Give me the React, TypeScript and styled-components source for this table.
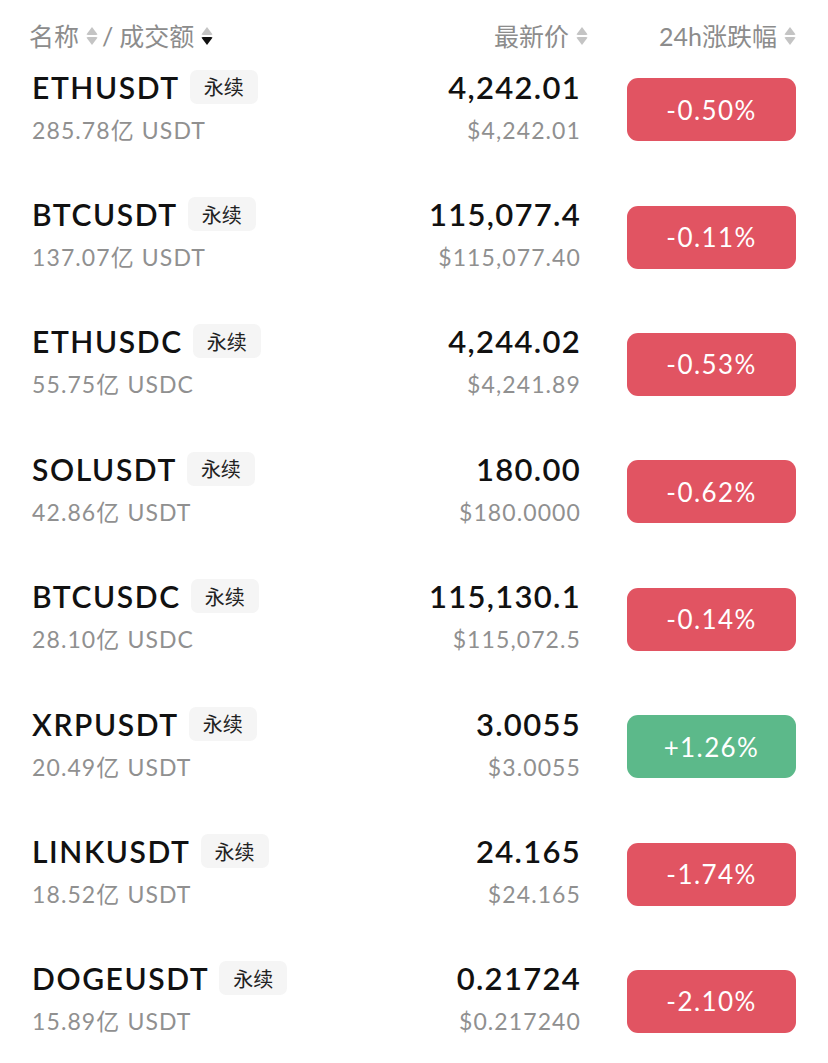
import React from "react";
import styled, { createGlobalStyle } from "styled-components";

const GlobalStyle = createGlobalStyle`
  html, body {
    margin: 0;
    padding: 0;
    background: #fff;
  }
  body {
    font-family: "Lato", "Noto Sans CJK SC", sans-serif;
    -webkit-font-smoothing: antialiased;
  }
`;

const Page = styled.div`
  width: 828px;
  padding: 0 32px;
  box-sizing: border-box;
`;

const Header = styled.div`
  display: grid;
  grid-template-columns: 1fr 200px 169px;
  column-gap: 46px;
  height: 46px;
  padding-top: 22px;
  box-sizing: border-box;
  font-size: 25px;
  line-height: 28px;
  color: #8c8c8c;
`;

const HeadCell = styled.div<{ $align?: "left" | "right"; $shift?: number }>`
  display: flex;
  align-items: center;
  justify-content: ${(p) => (p.$align === "right" ? "flex-end" : "flex-start")};
  margin-right: ${(p) => (p.$shift ? `${-p.$shift}px` : "0")};
  margin-left: ${(p) => (p.$align === "left" ? "-3px" : "0")};
  white-space: nowrap;
`;

const Slash = styled.span`
  margin: 0 6px 0 4px;
`;

const SortWrap = styled.span`
  display: inline-flex;
  flex-direction: column;
  gap: 2px;
  margin-left: 7px;
`;

const Tri = styled.span<{ $dir: "up" | "down"; $on?: boolean }>`
  width: 0;
  height: 0;
  border-left: 6px solid transparent;
  border-right: 6px solid transparent;
  ${(p) =>
    p.$dir === "up"
      ? `border-bottom: 8px solid ${p.$on ? "#111" : "#c4c4c4"};`
      : `border-top: 8px solid ${p.$on ? "#111" : "#c4c4c4"};`}
  border-radius: 2px;
`;

const Row = styled.div`
  display: grid;
  grid-template-columns: 1fr 200px 169px;
  column-gap: 46px;
  align-items: center;
  height: 127.4px;
`;

const Left = styled.div`
  display: flex;
  flex-direction: column;
  margin-bottom: 8px;
`;

const NameLine = styled.div`
  display: flex;
  align-items: center;
  height: 40px;
`;

const Symbol = styled.span`
  font-size: 30px;
  font-weight: 600;
  color: #111;
  letter-spacing: 1.6px;
`;

const Badge = styled.span`
  margin-left: 10px;
  height: 34px;
  padding: 0 14px;
  display: inline-flex;
  align-items: center;
  background: #f5f5f5;
  border-radius: 7px;
  font-size: 20px;
  color: #222;
`;

const SubText = styled.div`
  margin-top: 8px;
  font-size: 23px;
  line-height: 30px;
  color: #909090;
  letter-spacing: 1.1px;
`;

const Right = styled.div`
  display: flex;
  flex-direction: column;
  align-items: flex-end;
  margin-bottom: 8px;
`;

const Price = styled.div`
  height: 40px;
  display: flex;
  align-items: center;
  font-size: 31px;
  font-weight: 600;
  color: #111;
  letter-spacing: 1.3px;
`;

const Pill = styled.div<{ $up: boolean }>`
  height: 63px;
  border-radius: 11px;
  background: ${(p) => (p.$up ? "#5cb98a" : "#e15462")};
  color: #fff;
  display: flex;
  align-items: center;
  justify-content: center;
  font-size: 26px;
  letter-spacing: 1.4px;
`;

type Ticker = {
  symbol: string;
  volume: string;
  price: string;
  fiat: string;
  change: string;
};

const tickers: Ticker[] = [
  { symbol: "ETHUSDT", volume: "285.78亿 USDT", price: "4,242.01", fiat: "$4,242.01", change: "-0.50%" },
  { symbol: "BTCUSDT", volume: "137.07亿 USDT", price: "115,077.4", fiat: "$115,077.40", change: "-0.11%" },
  { symbol: "ETHUSDC", volume: "55.75亿 USDC", price: "4,244.02", fiat: "$4,241.89", change: "-0.53%" },
  { symbol: "SOLUSDT", volume: "42.86亿 USDT", price: "180.00", fiat: "$180.0000", change: "-0.62%" },
  { symbol: "BTCUSDC", volume: "28.10亿 USDC", price: "115,130.1", fiat: "$115,072.5", change: "-0.14%" },
  { symbol: "XRPUSDT", volume: "20.49亿 USDT", price: "3.0055", fiat: "$3.0055", change: "+1.26%" },
  { symbol: "LINKUSDT", volume: "18.52亿 USDT", price: "24.165", fiat: "$24.165", change: "-1.74%" },
  { symbol: "DOGEUSDT", volume: "15.89亿 USDT", price: "0.21724", fiat: "$0.217240", change: "-2.10%" },
];

function Sort({ down }: { down?: boolean }) {
  return (
    <SortWrap>
      <Tri $dir="up" />
      <Tri $dir="down" $on={down} />
    </SortWrap>
  );
}

export default function App() {
  return (
    <Page>
      <GlobalStyle />
      <Header>
        <HeadCell $align="left">
          名称
          <Sort />
          <Slash>/</Slash>
          成交额
          <Sort down />
        </HeadCell>
        <HeadCell $align="right" $shift={7}>
          最新价
          <Sort />
        </HeadCell>
        <HeadCell $align="right">
          24h涨跌幅
          <Sort />
        </HeadCell>
      </Header>
      {tickers.map((t) => (
        <Row key={t.symbol}>
          <Left>
            <NameLine>
              <Symbol>{t.symbol}</Symbol>
              <Badge>永续</Badge>
            </NameLine>
            <SubText>{t.volume}</SubText>
          </Left>
          <Right>
            <Price>{t.price}</Price>
            <SubText>{t.fiat}</SubText>
          </Right>
          <Pill $up={t.change.startsWith("+")}>{t.change}</Pill>
        </Row>
      ))}
    </Page>
  );
}
